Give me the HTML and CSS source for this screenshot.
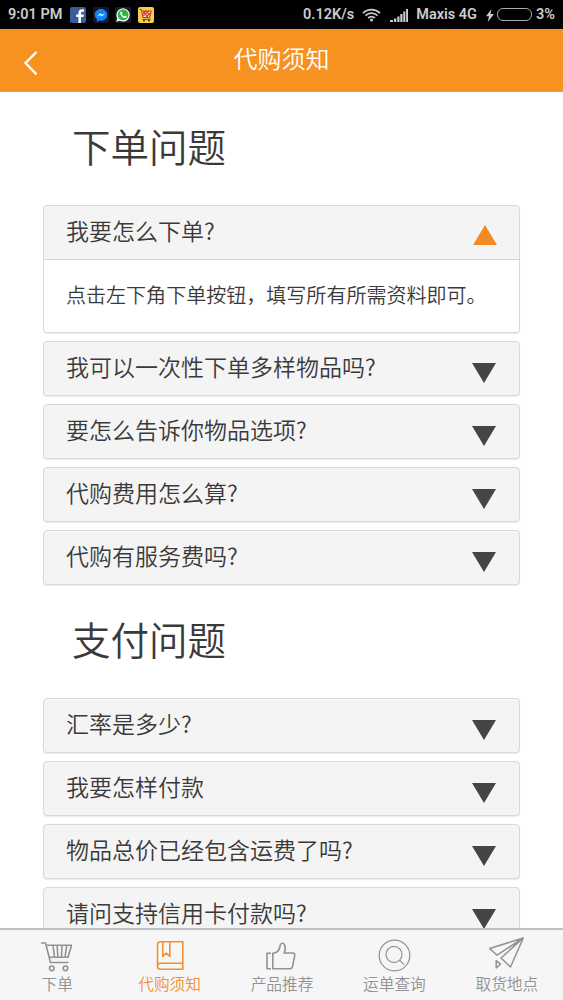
FILE: index.html
```
<!DOCTYPE html>
<html lang="zh-CN">
<head>
    <meta charset="UTF-8">
    <meta name="viewport" content="width=device-width, initial-scale=1.0">
    <title>代购须知</title>
    <link rel="stylesheet" href="styles.css">
</head>
<body>
    <div class="app">
        <div class="status-bar">
            <span class="time">9:01 PM</span>
            <div class="notifications">
                <svg width="16" height="16" viewBox="0 0 16 16">
                    <rect width="16" height="16" rx="2" fill="#3d5a9a"/>
                    <path d="M11 16V10h2.4l.4-2.6H11V6.2c0-.9.4-1.4 1.500-1.400H14V2.300c-3.400-.6-5.600.5-5.600 3.500v1.600H6.200V10h2.200v6z" fill="#fff"/>
                </svg>
                <svg width="16" height="16" viewBox="0 0 16 16">
                    <rect width="16" height="16" rx="2" fill="#14182b"/>
                    <path d="M8 2C4.500 2 1.800 4.500 1.800 7.700c0 1.800.8 3.300 2.200 4.400V15l2.200-1.400c4.500 1 8-1.900 8-5.900C14.200 4.500 11.500 2 8 2z" fill="#1286f7"/>
                    <path d="M4 9.500l3.200-3.300 1.700 1.600L12 6.200 8.900 9.500 7.200 7.900z" fill="#fff"/>
                </svg>
                <svg width="16" height="16" viewBox="0 0 16 16">
                    <rect width="16" height="16" rx="2" fill="#15202a"/>
                    <path d="M1.300 14.700l1-3.500A6.600 6.600 0 1 1 4.800 13.700z" fill="#fff"/>
                    <circle cx="8.100" cy="7.800" r="5.500" fill="#35b44a"/>
                    <path d="M5.700 4.800c-1.100 1.100-.5 2.900 1.300 4.600s3.400 2.100 4.400 1c.6-.7.3-1.100-.9-1.700-.6-.3-.8.700-1.300.6C8.200 9 7 7.800 6.700 7c.2-.4.700-.5.400-1.100-.4-1-.6-1.600-1.400-1.100z" fill="#fff"/>
                </svg>
                <svg width="16" height="16" viewBox="0 0 16 16">
                    <rect width="16" height="16" rx="2" fill="#f5cf45"/>
                    <path d="M3 4h10l-1.600 6H4.800z" fill="#fff3e4"/>
                    <path d="M1.500 2.500h1.700L5 10.500h6.500L13.200 4H3.500M5 4l5 6.400M8 4l3.500 4M11 4L5 9M8 4L4.500 7M12.500 6L8 10" stroke="#d23a30" stroke-width="1.100" fill="none"/>
                    <path d="M4.500 12.300h8" stroke="#7d4523"/>
                    <circle cx="6" cy="13.600" r="1" fill="#333"/>
                    <circle cx="11" cy="13.600" r="1" fill="#333"/>
                </svg>
            </div>
            <div class="status-right">
                <span class="speed">0.12K/s</span>
                <svg class="wifi" width="19" height="14" viewBox="0 0 19 14" fill="none" stroke="#ccc" stroke-width="1.700">
                    <path d="M1 5.100c4.900-4.600 12.100-4.600 17 0M3.500 7.600c3.500-3.200 8.500-3.200 12 0M6.100 10c2.100-1.800 4.700-1.800 6.800 0"/>
                    <circle cx="9.500" cy="12" r="1.500" fill="#ccc" stroke="none"/>
                </svg>
                <svg class="signal" width="18" height="13" viewBox="0 0 18 13" fill="#ccc">
                    <path d="M0 11h3v2H0zM4 9.500h2.300V13H4zM7.300 7.500h2.200V13H7.300zM10.300 5h2.200v8h-2.200zM13.300 2.500h2v10.500h-2zM16.100 0h2v13h-2z"/>
                </svg>
                <span class="carrier">Maxis 4G</span>
                <svg class="bolt" width="8" height="13" viewBox="0 0 8 13" fill="#ccc">
                    <path d="M5.500 0L0 7.300h3L1.700 13 8 5H4.400z"/>
                </svg>
                <span class="battery"></span>
                <span>3%</span>
            </div>
        </div>

        <header class="header">
            <svg class="back" width="15" height="26" viewBox="0 0 15 26">
                <path d="M13.500 2L2.500 13 13.500 24.300" fill="none" stroke="#fff" stroke-width="2.400"/>
            </svg>
            <h1>代购须知</h1>
        </header>

        <main class="content">
            <h2>下单问题</h2>
            <div class="accordion">
                <div class="card open">
                    <div class="question">
                        <span>我要怎么下单?</span>
                        <svg class="arrow" width="24" height="20" viewBox="0 0 24 20"><path d="M0 20L12 0l12 20z"/></svg>
                    </div>
                    <div class="answer">点击左下角下单按钮，填写所有所需资料即可。</div>
                </div>
                <div class="card">
                    <div class="question">
                        <span>我可以一次性下单多样物品吗?</span>
                        <svg class="arrow" width="24" height="20" viewBox="0 0 24 20"><path d="M0 0h24L12 20z"/></svg>
                    </div>
                </div>
                <div class="card">
                    <div class="question">
                        <span>要怎么告诉你物品选项?</span>
                        <svg class="arrow" width="24" height="20" viewBox="0 0 24 20"><path d="M0 0h24L12 20z"/></svg>
                    </div>
                </div>
                <div class="card">
                    <div class="question">
                        <span>代购费用怎么算?</span>
                        <svg class="arrow" width="24" height="20" viewBox="0 0 24 20"><path d="M0 0h24L12 20z"/></svg>
                    </div>
                </div>
                <div class="card">
                    <div class="question">
                        <span>代购有服务费吗?</span>
                        <svg class="arrow" width="24" height="20" viewBox="0 0 24 20"><path d="M0 0h24L12 20z"/></svg>
                    </div>
                </div>
            </div>

            <h2>支付问题</h2>
            <div class="accordion">
                <div class="card">
                    <div class="question">
                        <span>汇率是多少?</span>
                        <svg class="arrow" width="24" height="20" viewBox="0 0 24 20"><path d="M0 0h24L12 20z"/></svg>
                    </div>
                </div>
                <div class="card">
                    <div class="question">
                        <span>我要怎样付款</span>
                        <svg class="arrow" width="24" height="20" viewBox="0 0 24 20"><path d="M0 0h24L12 20z"/></svg>
                    </div>
                </div>
                <div class="card">
                    <div class="question">
                        <span>物品总价已经包含运费了吗?</span>
                        <svg class="arrow" width="24" height="20" viewBox="0 0 24 20"><path d="M0 0h24L12 20z"/></svg>
                    </div>
                </div>
                <div class="card">
                    <div class="question">
                        <span>请问支持信用卡付款吗?</span>
                        <svg class="arrow" width="24" height="20" viewBox="0 0 24 20"><path d="M0 0h24L12 20z"/></svg>
                    </div>
                </div>
            </div>
        </main>

        <nav class="tab-bar">
            <a class="tab">
                <svg width="36" height="36" viewBox="0 0 36 36">
                    <path d="M2 4h4.500l5 19.500h18M7.500 6.200h25L29 18.200H10.500M14 6.500l1.500 11.500M18.200 6.500l.7 11.500M23 6.500L22.500 18M27.700 6.500L26 18"/>
                    <circle cx="12.800" cy="29.300" r="2.300"/>
                    <circle cx="26.500" cy="29.300" r="2.300"/>
                </svg>
                <span>下单</span>
            </a>
            <a class="tab active">
                <svg width="36" height="36" viewBox="0 0 36 36">
                    <path d="M8.500 2.800h22.300v27.400H8.500c-1.800 0-3-1.200-3-3V5.800c0-1.800 1.200-3 3-3zM5.500 27.200c0-2 1.200-3 3-3h22.300M10.700 3v14.500l3.500-3.300 3.600 3.300V3"/>
                </svg>
                <span>代购须知</span>
            </a>
            <a class="tab">
                <svg width="36" height="36" viewBox="0 0 36 36">
                    <path d="M7 14.200H3v15.500h4M8.800 14.200v15.500H26c1.600 0 2.200-.8 2.500-2l2.200-11c.3-1.700-.5-2.700-2-2.700h-8.500c1.300-3 1.300-6 .3-8.400-.9-2-3.700-1.800-4.200.3-.3 3-1 4.800-2.700 6.400-1.300 1.200-2.700 1.800-4.800 1.900z"/>
                </svg>
                <span>产品推荐</span>
            </a>
            <a class="tab">
                <svg class="thin" width="36" height="36" viewBox="0 0 36 36">
                    <circle cx="18.500" cy="16.500" r="15.300"/>
                    <circle cx="18" cy="15.400" r="8"/>
                    <path d="M23.500 21.200l4.500 4.500"/>
                </svg>
                <span>运单查询</span>
            </a>
            <a class="tab">
                <svg class="plane" width="36" height="36" viewBox="0 0 36 36">
                    <path d="M34.300-1L.7 9.500l7.300 6.700zL12 19l9.500 9zM7.200 21.500v7.500l4.200-3.900z"/>
                </svg>
                <span>取货地点</span>
            </a>
        </nav>
    </div>
</body>
</html>
```
FILE: styles.css
```
* {
    box-sizing: border-box;
}

body {
    margin: 0;
    font-family: "Noto Sans CJK SC", sans-serif;
    font-weight: 350;
    color: #3a3a3a;
    background: #fff;
}

.app {
    display: flex;
    flex-direction: column;
    height: 1000px;
    overflow: hidden;
}

/* Status bar */
.status-bar {
    display: flex;
    align-items: center;
    flex: none;
    height: 29px;
    padding: 0 8px;
    background: #000;
    color: #ccc;
    font: 600 14.500px Roboto, sans-serif;
}

.notifications {
    display: flex;
    gap: 6.500px;
    margin-left: 8px;
}

.status-right {
    display: flex;
    align-items: center;
    margin-left: auto;
}

.wifi {
    margin-left: 8px;
}

.signal {
    margin: 1px 8px 0 9px;
}

.bolt {
    margin: 1px 3px 0 9px;
}

.battery {
    width: 35px;
    height: 13px;
    margin-right: 4px;
    border: 1px solid #aaa;
    border-radius: 6px;
}

/* Header */
.header {
    display: flex;
    align-items: center;
    flex: none;
    height: 63px;
    padding: 0 23px;
    background: #f79220;
    border-bottom: 1px solid #f0a04a;
    color: #fff;
}

.header .back {
    margin-top: 5px;
}

.header h1 {
    flex: 1;
    margin: 0 15px 4px 0;
    font-size: 24px;
    font-weight: 350;
    line-height: 36px;
    text-align: center;
}

/* Questions */
.content {
    flex: 1;
    min-height: 0;
    padding: 0 43px;
    overflow: hidden;
}

.content h2 {
    height: 113px;
    margin: 0;
    padding: 24px 0 0 29px;
    font-size: 38.500px;
    font-weight: 350;
    line-height: 58px;
}

.accordion {
    display: flex;
    flex-direction: column;
    gap: 8px;
}

.card {
    background: #f5f4f5;
    border: 1px solid #d9d9d9;
    border-radius: 4px;
    box-shadow: 0 1px 1px rgba(0, 0, 0, 0.08);
    overflow: hidden;
}

.question {
    display: flex;
    align-items: center;
    justify-content: space-between;
    height: 53px;
    padding: 0 23px 0 22px;
    font-size: 23px;
    line-height: 34px;
}

.question span {
    margin-bottom: 5px;
}

.arrow {
    margin-top: 8px;
    fill: #454545;
}

.open .question {
    padding-right: 22px;
}

.open .arrow {
    margin-top: 5px;
    fill: #f58a22;
}

.answer {
    height: 73px;
    padding: 20px 22px;
    background: #fff;
    border-top: 1px solid #d4d4d4;
    font-size: 20.050px;
    line-height: 30px;
    white-space: nowrap;
}

/* Bottom tabs */
.tab-bar {
    display: flex;
    flex: none;
    height: 72px;
    padding-left: 1px;
    background: #f7f6f7;
    border-top: 2px solid #c0c0c0;
}

.tab {
    display: flex;
    flex: 1;
    flex-direction: column;
    align-items: center;
    padding-top: 9px;
    color: #929292;
    font-size: 15.700px;
    line-height: 18px;
}

.tab svg {
    fill: none;
    stroke: currentColor;
    stroke-width: 1.600;
    stroke-linejoin: round;
    overflow: visible;
}

.tab .thin {
    stroke-width: 1.200;
}

.tab .plane {
    stroke-width: 1.500;
}

.tab.active {
    color: #f09030;
}
```
